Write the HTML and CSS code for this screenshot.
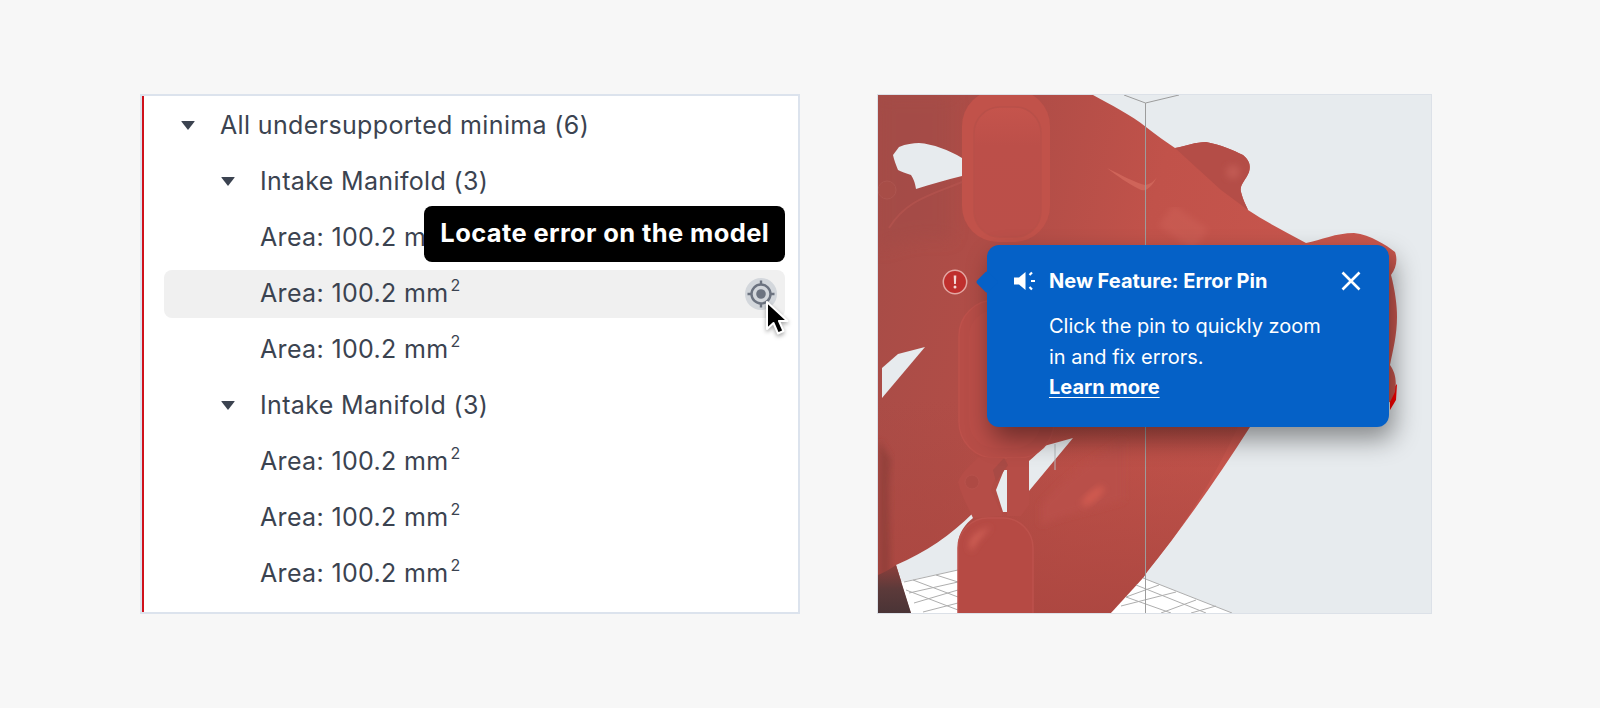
FILE: index.html
```html
<!DOCTYPE html>
<html lang="en">
<head>
<meta charset="utf-8">
<title>Error Pin</title>
<link rel="stylesheet" href="styles.css">
</head>
<body>
<main class="page">
  <section class="tree-panel">
    <ul class="tree">
      <li class="row lvl0"><span class="caret"></span><span>All undersupported minima (6)</span></li>
      <li class="row lvl1"><span class="caret"></span><span>Intake Manifold (3)</span></li>
      <li class="row lvl2">
        <span>Area: 100.2 mm<sup>2</sup></span>
        <div class="hint">Locate error on the model</div>
      </li>
      <li class="row lvl2 active">
        <span>Area: 100.2 mm<sup>2</sup></span>
        <svg class="locate" viewBox="0 0 32 32" width="32" height="32">
          <circle cx="16" cy="16" r="16" fill="#d3d7dc"/>
          <circle cx="16" cy="16" r="9.5" fill="none" stroke="#6c7380" stroke-width="2.4"/>
          <circle cx="16" cy="16" r="4.8" fill="#6c7380"/>
          <path d="M16 2.500V7M16 25v4.500M2.500 16H7M25 16h4.500" stroke="#6c7380" stroke-width="2.4" fill="none"/>
        </svg>
        <svg class="pointer" viewBox="0 0 26 38" width="26" height="38">
          <path d="M3 2V29L9.500 23L14 33.500L19.500 31L15 21H23.500Z" fill="#000" stroke="#fff" stroke-width="2" stroke-linejoin="round"/>
        </svg>
      </li>
      <li class="row lvl2"><span>Area: 100.2 mm<sup>2</sup></span></li>
      <li class="row lvl1"><span class="caret"></span><span>Intake Manifold (3)</span></li>
      <li class="row lvl2"><span>Area: 100.2 mm<sup>2</sup></span></li>
      <li class="row lvl2"><span>Area: 100.2 mm<sup>2</sup></span></li>
      <li class="row lvl2"><span>Area: 100.2 mm<sup>2</sup></span></li>
    </ul>
  </section>

  <section class="viewer">
    <svg class="model" viewBox="877 95 554 518" width="554" height="518">
      <defs>
        <linearGradient id="body" x1="0" y1="0" x2="1" y2="0.25">
          <stop offset="0" stop-color="#a54c47"/>
          <stop offset="0.3" stop-color="#b14d47"/>
          <stop offset="0.55" stop-color="#c1524a"/>
          <stop offset="1" stop-color="#c9574e"/>
        </linearGradient>
        <linearGradient id="lower" x1="0" y1="0" x2="0" y2="1">
          <stop offset="0" stop-color="#a8463f" stop-opacity="0"/>
          <stop offset="1" stop-color="#ab4640" stop-opacity="0.9"/>
        </linearGradient>
        <linearGradient id="port" x1="0" y1="0" x2="0" y2="1">
          <stop offset="0" stop-color="#c5544c"/>
          <stop offset="0.3" stop-color="#bc4f49"/>
          <stop offset="1" stop-color="#bb4f49"/>
        </linearGradient>
        <linearGradient id="soot" x1="0" y1="0" x2="0" y2="1">
          <stop offset="0" stop-color="#8d3f3b"/>
          <stop offset="0.5" stop-color="#5c3a3a"/>
          <stop offset="1" stop-color="#4a3436"/>
        </linearGradient>
        <filter id="soft" x="-30%" y="-30%" width="160%" height="160%"><feGaussianBlur stdDeviation="3"/></filter>
        <filter id="softer" x="-30%" y="-30%" width="160%" height="160%"><feGaussianBlur stdDeviation="8"/></filter>
      </defs>

      <path d="M1389 392l7 -8l-1 16l-6 10z" fill="#f00"/>
      <path fill="url(#body)" d="M877 95H1092C1110 105 1130 115 1145 127C1155 135 1165 142 1174 148C1185 146 1195 142 1205 142C1220 145 1232 150 1242 155C1248 160 1250 165 1248 172C1245 180 1238 185 1240 192C1242 200 1245 205 1247 210C1265 222 1285 232 1305 243C1320 240 1335 233 1353 233C1370 235 1385 245 1394 252C1397 260 1395 268 1390 275C1394 290 1396 305 1396 317C1396 335 1392 350 1389 365C1394 372 1396 380 1394 392L1389 402L1300 427H1249C1215 480 1180 530 1146 572C1135 590 1120 605 1110 613H877Z"/>
      <path fill="url(#lower)" d="M877 400H1249C1215 480 1180 530 1146 572C1135 590 1120 605 1110 613H877Z"/>

      <path d="M1174 148C1185 146 1195 142 1205 142C1220 145 1232 150 1242 155C1248 160 1250 165 1248 172C1245 180 1238 185 1240 192C1242 200 1245 205 1247 210L1220 190Z" fill="#b44d47"/>
      <circle cx="1232" cy="172" r="7" fill="#c15a53" filter="url(#soft)"/>
      <path d="M877 95H950V240C930 235 900 240 877 250Z" fill="#a24c47" opacity=".55" filter="url(#softer)"/>
      <path d="M890 460C885 500 892 550 888 600L878 600V440Z" fill="#8a3d39" opacity=".7" filter="url(#soft)"/>
      <path d="M1106 168C1120 175 1135 183 1144 185C1150 184 1153 181 1156 177C1150 188 1144 193 1138 189C1128 184 1116 176 1106 168Z" fill="#cf6459"/>
      <path d="M1165 215L1200 240" stroke="#d56a60" stroke-width="26" opacity=".3" filter="url(#soft)"/>

      <!-- upper port -->
      <rect x="961" y="90" width="88" height="152" rx="36" fill="#c1524a"/>
      <rect x="973" y="107" width="67" height="130" rx="26" fill="url(#port)" stroke="#b95049" stroke-width="1.500"/>
      <!-- side arc -->
      <path d="M888 228C905 200 930 195 961 182" fill="none" stroke="#b5544e" stroke-width="2" opacity=".7"/>
      <circle cx="886" cy="190" r="9" fill="#a74d47" stroke="#ad5550"/>

      <!-- background showing through the model -->
      <path fill="#e7ebee" d="M892 155L898 147C905 144 912 143 918 143C932 144 948 150 961 158V176C945 180 930 184 915 189C914 182 912 178 910 175C905 173 900 172 897 170C895 165 893 160 892 155Z"/>
      <path fill="#e7ebee" d="M924 347L897 354L881 368V398Z"/>
      <path fill="#e7ebee" d="M1072 438L1043 446C1038 452 1033 457 1028 461V491Z"/>
      <path fill="#e7ebee" d="M995 490L1003 470H1006V512H1002Z"/>
      <path fill="#e7ebee" d="M972 513C950 535 925 552 895 565L910 613H957V543C958 533 964 524 972 518Z"/>
      <path d="M1054 444V470" stroke="#b5b8ba" stroke-width="1"/>

      <!-- build plate -->
      <path fill="#fff" d="M900 582L957 570V613H910Z"/>
      <path fill="#fff" d="M1142 578L1231 613H1110Z"/>
      <path d="M903 582L957 570M912 580L957 597M935 575L957 582M908 593L957 582M913 603L957 590M922 612L957 603M905 590L957 610" stroke="#aeaeae" stroke-width="1" fill="none"/>
      <path d="M1142 578L1231 613M1125 597L1170 613M1135 585L1205 613M1158 585L1125 597M1175 592L1120 606M1195 600L1160 613M1215 606L1190 613" stroke="#aeaeae" stroke-width="1" fill="none"/>
      <path d="M877 575C885 572 890 568 895 565L910 613H877Z" fill="url(#soot)"/>

      <!-- lower loop, link and reservoir -->
      <rect x="958" y="300" width="95" height="158" rx="36" fill="#b74d47" stroke="#bd514b" stroke-width="1.500"/>
      <rect x="968" y="310" width="72" height="138" rx="26" fill="#ba4e48"/>
      <path d="M977 457L1002 458L990 490L1002 516L972 518C966 505 960 495 957 482C962 470 970 465 977 457Z" fill="#b54d47"/>
      <circle cx="971" cy="482" r="7" fill="#ae4a44" stroke="#b8524c"/>
      <path d="M1006 458H1028V505L1020 516H1006Z" fill="#b64d47"/>
      <path d="M992 470L1003 458L1007 465L995 482Z" fill="#a84a45"/>
      <path d="M1040 505C1070 470 1100 455 1122 440V500C1090 510 1060 515 1040 525Z" fill="#b94f49" filter="url(#soft)"/>
      <ellipse cx="1092" cy="496" rx="14" ry="5" transform="rotate(-40 1092 496)" fill="#d05a50" filter="url(#soft)"/>
      <rect x="957" y="518" width="75" height="125" rx="30" fill="#b64a44" stroke="#bd524c" stroke-width="1.500"/>
      <path d="M968 545C970 535 978 530 990 527C984 533 976 540 970 552Z" fill="#cf5f55" filter="url(#soft)"/>
      <path d="M1035 555V613" stroke="#9c423d" stroke-width="7" opacity=".45" filter="url(#soft)"/>

      <!-- axis lines -->
      <path d="M1123 95L1144.500 103L1178 95M1144.500 103V613" fill="none" stroke="#9c9c9c" stroke-width="1"/>
    </svg>

    <svg class="pin" viewBox="0 0 26 26" width="26" height="26">
      <circle cx="13" cy="13" r="11.700" fill="#bf2f2d" stroke="#e3a7a3" stroke-width="1.500"/>
      <path d="M11.700 6.500h2.600l-.4 8.500h-1.800z" fill="#f3d8d6"/>
      <circle cx="13" cy="18" r="1.500" fill="#f3d8d6"/>
    </svg>

    <aside class="popover">
      <header class="pop-head">
        <svg class="horn" viewBox="0 0 22 20" width="22" height="20">
          <path d="M1 6.500H6L12.500 1V19L6 13.500H1Z" fill="#fff"/>
          <path d="M16.500 4L19 1.500M18 10H22M16.500 16L19 18.500" stroke="#fff" stroke-width="2.200" fill="none"/>
        </svg>
        <h2 class="pop-title">New Feature: Error Pin</h2>
        <svg class="close" viewBox="0 0 20 20" width="20" height="20">
          <path d="M1.500 1.500L18.500 18.500M18.500 1.500L1.500 18.500" stroke="#fff" stroke-width="2.600" fill="none"/>
        </svg>
      </header>
      <p class="pop-text">Click the pin to quickly zoom<br>in and fix errors.</p>
      <a class="pop-link" href="#">Learn more</a>
    </aside>
  </section>
</main>
</body>
</html>
```
FILE: styles.css
```css
* { box-sizing: border-box; }

html, body { margin: 0; height: 708px; overflow: hidden; }

body {
  background: #f7f7f7;
  font-family: "Inter", "Liberation Sans", sans-serif;
  color: #3b4350;
}

.page {
  display: flex;
  gap: 77px;
  padding: 94px 0 0 140px;
}

/* tree */
.tree-panel {
  width: 660px;
  height: 520px;
  background: #fff;
  border: 2px solid #dce3ed;
  position: relative;
}

.tree-panel::before {
  content: "";
  position: absolute;
  top: 0;
  bottom: 0;
  left: 0;
  width: 2px;
  background: #d0111b;
}

.tree {
  list-style: none;
  margin: 0;
  padding: 6px 13px 0 22px;
}

.row {
  position: relative;
  display: flex;
  align-items: center;
  height: 48px;
  margin-bottom: 8px;
  padding-bottom: 2px;
  font-size: 25px;
  letter-spacing: .35px;
  white-space: nowrap;
}

.lvl0 { padding-left: 17px; }
.lvl1 { padding-left: 57px; }
.lvl2 { padding-left: 96px; }

.lvl0 .caret, .lvl1 .caret { margin-right: 25px; }

.caret {
  width: 0;
  height: 0;
  flex: none;
  border-left: 7px solid transparent;
  border-right: 7px solid transparent;
  border-top: 9px solid #3b4350;
  border-radius: 1px;
}

sup {
  font-size: 16px;
  line-height: 0;
  vertical-align: baseline;
  position: relative;
  top: -11px;
  margin-left: 2px;
}

.active {
  background: #f0f0f0;
  border-radius: 8px;
}

.locate {
  position: absolute;
  right: 8px;
  top: 8px;
}

.pointer {
  position: absolute;
  right: -5px;
  top: 30px;
  filter: drop-shadow(0 2px 2px rgba(0, 0, 0, .35));
}

.hint {
  position: absolute;
  right: 0;
  top: -8px;
  height: 56px;
  display: flex;
  align-items: center;
  padding: 0 16px 3px;
  background: #000;
  border-radius: 8px;
  color: #fff;
  font-size: 25.500px;
  letter-spacing: .38px;
  font-weight: 700;
  z-index: 2;
}

/* viewer */
.viewer {
  position: relative;
  width: 555px;
  height: 520px;
  background: #e7ebee;
  border: 1px solid #dce1e8;
}

.model { display: block; }

.pin {
  position: absolute;
  left: 64px;
  top: 174px;
}

.popover {
  position: absolute;
  left: 109px;
  top: 150px;
  width: 402px;
  height: 182px;
  padding: 20px 28px 0 26px;
  background: #0561c7;
  border-radius: 12px;
  color: #fff;
  box-shadow: 5px 12px 26px rgba(0, 0, 0, .42);
}

.popover::before {
  content: "";
  position: absolute;
  left: -8px;
  top: 29px;
  width: 16px;
  height: 16px;
  background: #0561c7;
  border-radius: 2px;
  transform: rotate(45deg);
}

.pop-head {
  display: flex;
  align-items: center;
  height: 32px;
}

.horn { flex: none; margin-right: 14px; }

.pop-title {
  flex: 1;
  margin: 0;
  font-size: 20px;
  font-weight: 700;
}

.close { flex: none; }

.pop-text {
  margin: 14px 0 0 36px;
  font-size: 20px;
  line-height: 30.500px;
}

.pop-link {
  display: block;
  width: max-content;
  margin-left: 36px;
  color: #fff;
  font-size: 20px;
  line-height: 30px;
  font-weight: 700;
  text-decoration: underline;
  text-underline-offset: 3px;
  text-decoration-thickness: 1px;
}
```
